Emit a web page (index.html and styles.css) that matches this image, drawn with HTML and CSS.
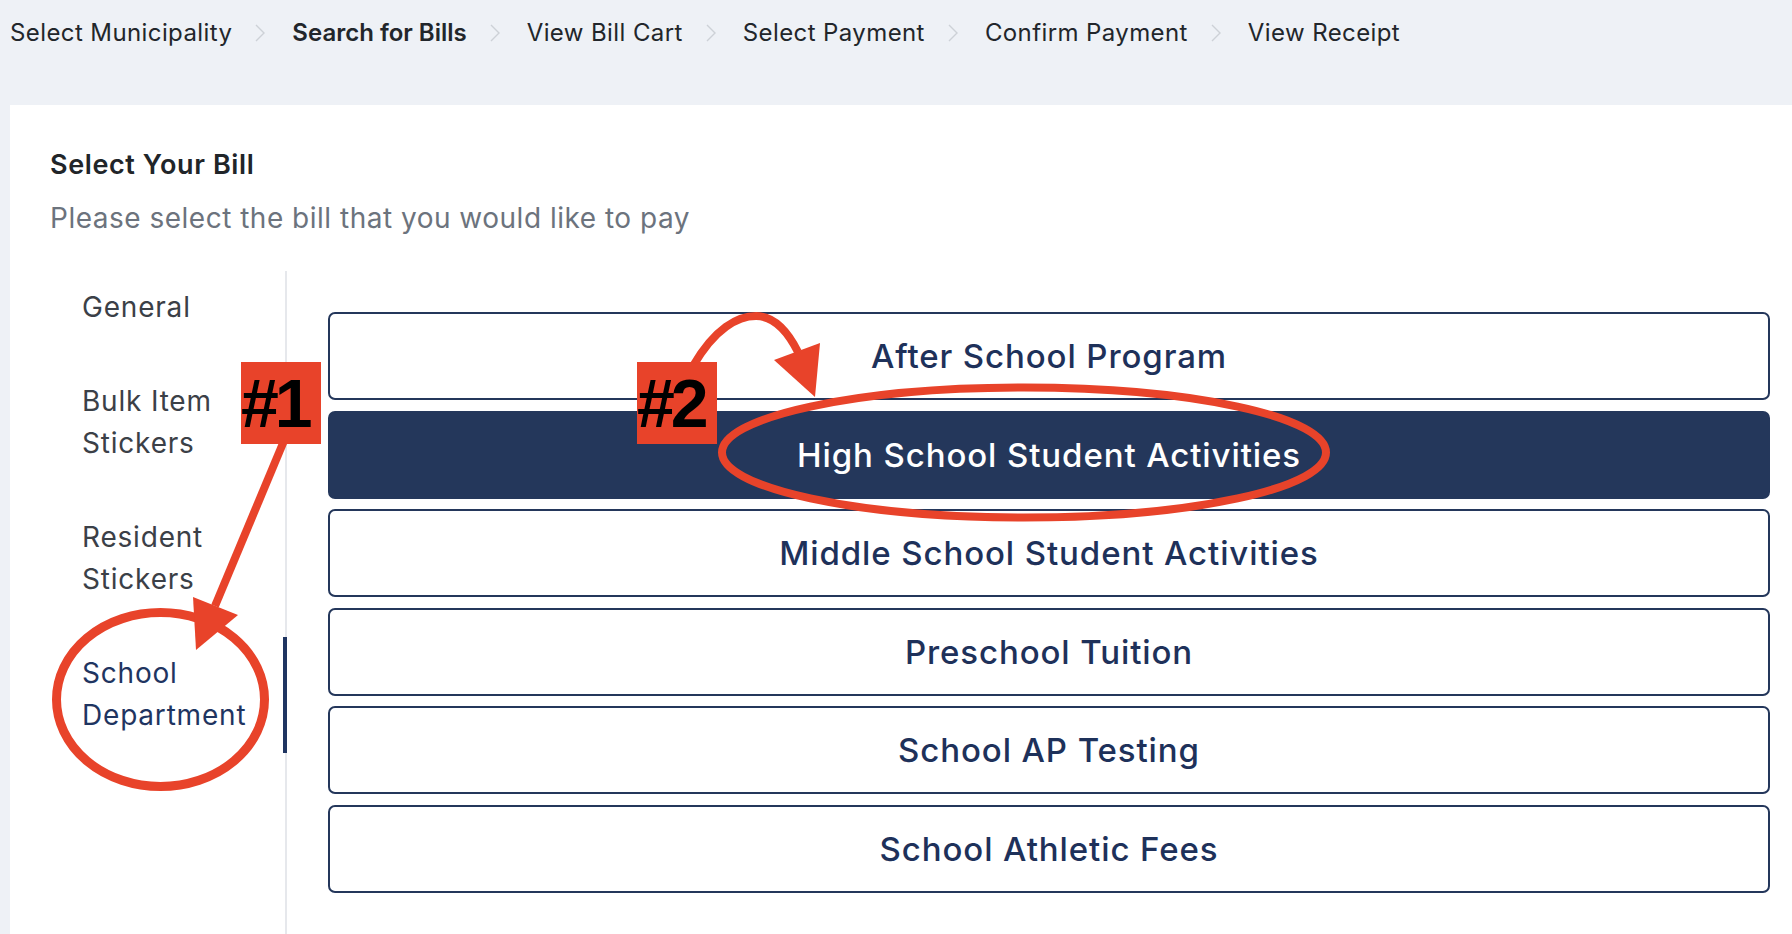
FILE: index.html
```html
<!DOCTYPE html>
<html lang="en">
<head>
<meta charset="utf-8">
<title>Search for Bills</title>
<link rel="stylesheet" href="styles.css">
</head>
<body>
<nav class="crumbs">
  <span class="crumb">Select Municipality</span>
  <svg class="chev" viewBox="0 0 12 18"><polyline points="2,1 10,9 2,17"/></svg>
  <span class="crumb current">Search for Bills</span>
  <svg class="chev" viewBox="0 0 12 18"><polyline points="2,1 10,9 2,17"/></svg>
  <span class="crumb">View Bill Cart</span>
  <svg class="chev" viewBox="0 0 12 18"><polyline points="2,1 10,9 2,17"/></svg>
  <span class="crumb">Select Payment</span>
  <svg class="chev" viewBox="0 0 12 18"><polyline points="2,1 10,9 2,17"/></svg>
  <span class="crumb">Confirm Payment</span>
  <svg class="chev" viewBox="0 0 12 18"><polyline points="2,1 10,9 2,17"/></svg>
  <span class="crumb">View Receipt</span>
</nav>

<main class="panel">
  <h1 class="title">Select Your Bill</h1>
  <p class="subtitle">Please select the bill that you would like to pay</p>

  <div class="content">
    <ul class="side">
      <li class="side-item">General</li>
      <li class="side-item">Bulk Item<br>Stickers</li>
      <li class="side-item">Resident<br>Stickers</li>
      <li class="side-item active">School<br>Department</li>
    </ul>
    <div class="bills">
      <button class="bill">After School Program</button>
      <button class="bill selected">High School Student Activities</button>
      <button class="bill">Middle School Student Activities</button>
      <button class="bill">Preschool Tuition</button>
      <button class="bill">School AP Testing</button>
      <button class="bill">School Athletic Fees</button>
    </div>
  </div>
</main>

<svg class="marks" viewBox="0 0 1792 934" width="1792" height="934">
  <ellipse cx="160.5" cy="699.5" rx="104" ry="87" class="ring ring-thick"/>
  <line x1="286" y1="436" x2="215" y2="606" class="stroke"/>
  <polygon points="193,597 238,615 196,650" class="head"/>
  <ellipse cx="1024" cy="452.5" rx="302" ry="65" class="ring"/>
  <path d="M 693 366 C 715 328, 738 316, 756 316 C 775 316, 788 332, 798 352" class="stroke"/>
  <polygon points="774,360 820,343 815,397" class="head"/>
</svg>
<div class="tag tag-1">#1</div>
<div class="tag tag-2">#2</div>
</body>
</html>
```

FILE: styles.css
```css
* { box-sizing: border-box; }

html, body {
  margin: 0;
  padding: 0;
}

body {
  position: relative;
  width: 1792px;
  min-height: 934px;
  background: #eef1f6;
  font-family: Inter, "Noto Sans", "Liberation Sans", sans-serif;
  color: #212529;
  overflow: hidden;
}

/* breadcrumbs */
.crumbs {
  display: flex;
  align-items: flex-start;
  height: 105px;
  padding: 18px 0 0 10px;
}

.crumb {
  font-size: 24px;
  line-height: 30px;
  letter-spacing: 0.4px;
  color: #22262b;
  white-space: nowrap;
}

.crumb.current {
  font-weight: 600;
  letter-spacing: 0;
}

.chev {
  width: 12px;
  height: 18px;
  margin: 6px 26px 0 22px;
  fill: none;
  stroke: #cdd1d7;
  stroke-width: 1.4;
}

/* panel */
.panel {
  margin-left: 10px;
  background: #ffffff;
  padding: 42px 22px 0 40px;
  min-height: 829px;
}

.title {
  margin: 0;
  font-size: 27px;
  line-height: 36px;
  font-weight: 600;
  letter-spacing: 0.6px;
  color: #212529;
}

.subtitle {
  margin: 17px 0 0;
  font-size: 28px;
  line-height: 36px;
  letter-spacing: 0.5px;
  color: #6c737d;
}

.content {
  display: flex;
  margin-top: 35px;
  min-height: 663px;
}

.side {
  list-style: none;
  margin: 0;
  padding: 0 0 0 32px;
  width: 237px;
  flex: none;
  border-right: 2px solid #e6e8ec;
  display: flex;
  flex-direction: column;
  gap: 22px;
}

.side-item {
  position: relative;
  padding: 15px 0;
  font-size: 28px;
  line-height: 42px;
  letter-spacing: 0.8px;
  color: #3b4047;
  white-space: nowrap;
}

.side-item.active {
  color: #1f3561;
}

.side-item.active::after {
  content: "";
  position: absolute;
  top: 0;
  bottom: -2px;
  right: -2px;
  width: 4px;
  background: #1f3561;
}

.bills {
  flex: 1;
  display: flex;
  flex-direction: column;
  gap: 10.5px;
  padding: 41px 0 0 41px;
}

.bill {
  height: 88px;
  border: 2px solid #24375b;
  border-radius: 7px;
  background: #ffffff;
  font-family: inherit;
  font-size: 33px;
  font-weight: 500;
  letter-spacing: 0.9px;
  color: #1e315a;
  cursor: pointer;
  padding: 0;
}

.bill.selected {
  background: #24375b;
  color: #ffffff;
}

/* annotations */
.marks {
  position: absolute;
  left: 0;
  top: 0;
  pointer-events: none;
}

.ring {
  fill: none;
  stroke: #e8432a;
  stroke-width: 8;
}

.ring-thick {
  stroke-width: 9;
}

.stroke {
  fill: none;
  stroke: #e8432a;
  stroke-width: 8;
}

.head {
  fill: #e8432a;
}

.tag {
  position: absolute;
  width: 80px;
  height: 82px;
  background: #e8432a;
  color: #000000;
  font-family: "Liberation Sans", Arial, sans-serif;
  font-weight: 700;
  font-size: 68px;
  line-height: 82px;
  letter-spacing: -4px;
  white-space: nowrap;
}

.tag-1 {
  left: 241px;
  top: 362px;
}

.tag-2 {
  left: 637px;
  top: 362px;
}
```
